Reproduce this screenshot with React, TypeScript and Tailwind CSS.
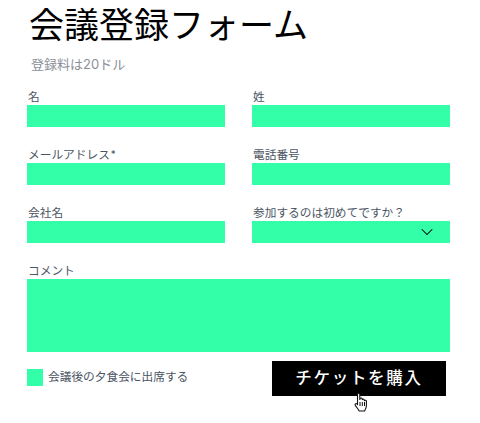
import { ChevronDown } from 'lucide-react';

const font = "font-['Inter','Noto_Sans_CJK_JP',sans-serif]";

function Field({ label, required, children }: { label: string; required?: boolean; children?: React.ReactNode }) {
  return (
    <div className="flex flex-col">
      <label className="h-[18px] pl-px text-[11.7px] leading-[20px] text-[#4b5563]">
        {label}
        {required && <span className="relative top-[-1px] ml-[1px] text-[10px]">*</span>}
      </label>
      <div className="flex h-[22px] items-center justify-end bg-[#33ffa8] pr-[13px]">{children}</div>
    </div>
  );
}

// hand pointer that lies over the page, as in the screenshot
function HandCursor() {
  return (
    <svg className="absolute left-[353px] top-[392px]" width="17" height="20" viewBox="0 0 17 20">
      <path
        d="M4.5 2.2c0-1.5 2.3-1.5 2.3 0v5.3l.4-1c.8-.9 2-.5 2 .5l.1.6c.7-.8 2-.5 2 .6l.1.4c.8-.7 2-.3 2 .8v4.3c0 2-1.2 4.3-1.8 5.3H6.200c-.8-1.500-2.200-3.200-3.900-5.600-.8-1.200.5-2.500 1.600-1.500l.6.7z"
        fill="#fff"
        stroke="#111"
        strokeWidth="1.100"
        strokeLinejoin="round"
      />
      <path d="M7 10v4M9.300 10v4M11.500 10v4" stroke="#111" strokeWidth="1" />
    </svg>
  );
}

export default function App() {
  return (
    <div className={`${font} relative h-[423px] w-[480px] overflow-hidden bg-white pl-[27px] pr-[30px]`}>
      <h1 className="h-[48px] pl-[2px] pt-[2px] text-[35px] leading-[46px] text-black">会議登録フォーム</h1>
      <p className="mt-[6px] h-[20px] pl-[4px] text-[13px] leading-[20px] text-[#8a8f98]">登録料は20ドル</p>
      <form className="mt-[13px]">
        <div className="grid grid-cols-2 gap-x-[27px] gap-y-[18px]">
          <Field label="名" />
          <Field label="姓" />
          <Field label="メールアドレス" required />
          <Field label="電話番号" />
          <Field label="会社名" />
          <Field label="参加するのは初めてですか？">
            <ChevronDown className="h-[20px] w-[20px] text-black" strokeWidth={1.250} />
          </Field>
        </div>
        <div className="mt-[18px] flex flex-col">
          <label className="h-[18px] pl-px text-[11.7px] leading-[20px] text-[#4b5563]">コメント</label>
          <div className="h-[73px] bg-[#33ffa8]" />
        </div>
        <div className="mt-[9px] flex items-start justify-between pr-[4px]">
          <div className="mt-[8px] flex items-center gap-[5px]">
            <span className="h-[17px] w-[16px] bg-[#33ffa8]" />
            <span className="text-[11.7px] leading-[17px] text-[#4b5563]">会議後の夕食会に出席する</span>
          </div>
          <button type="button" className="h-[35px] w-[174px] bg-black text-[16.5px] font-medium tracking-[1.700px] text-white">
            チケットを購入
          </button>
        </div>
      </form>
      <HandCursor />
    </div>
  );
}
